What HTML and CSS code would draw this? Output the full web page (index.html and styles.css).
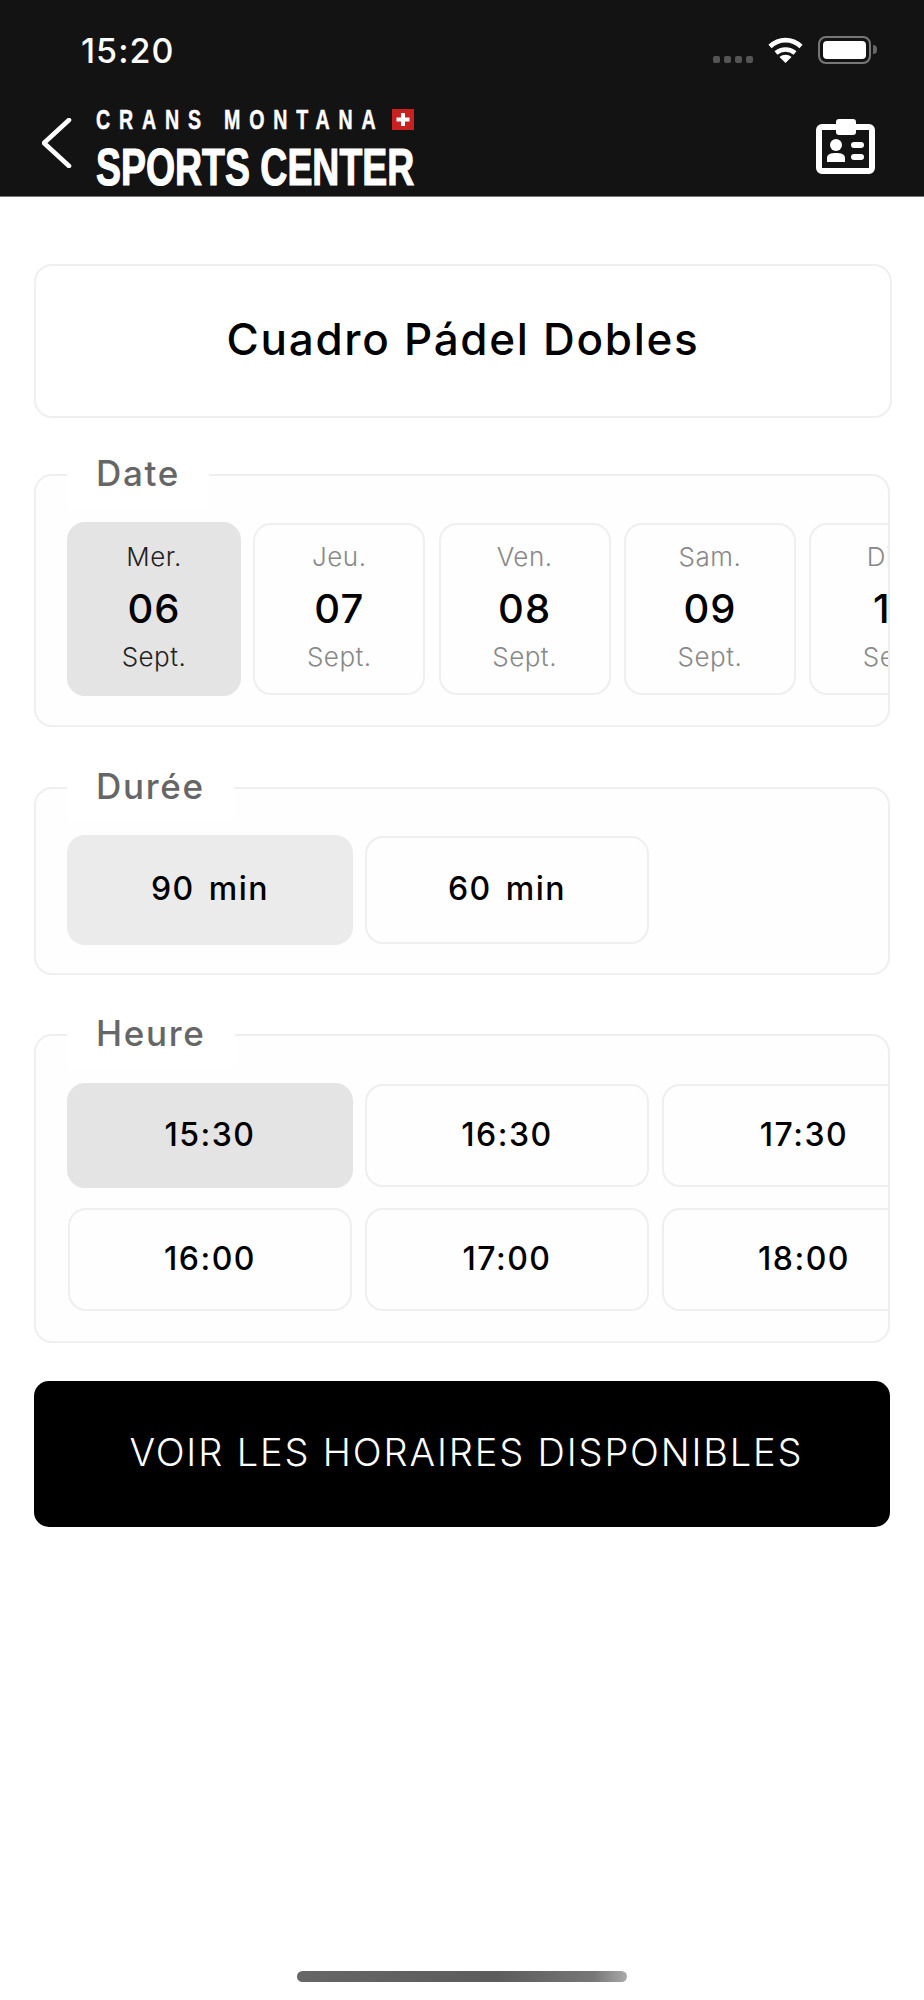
FILE: index.html
```html
<!DOCTYPE html>
<html lang="fr">
<head>
    <meta charset="UTF-8">
    <meta name="viewport" content="width=device-width, initial-scale=1.0">
    <title>Sports Center</title>
    <link rel="stylesheet" href="styles.css">
</head>
<body>
    <header class="header">
        <div class="status-bar">
            <span class="status-time">15:20</span>
            <div class="status-icons">
                <div class="signal"><i></i><i></i><i></i><i></i></div>
                <svg class="wifi" width="35" height="27" viewBox="0 0 35 27">
                    <path d="M2 10.5 C11 2 24 2 33 10.5" fill="none" stroke="#fff" stroke-width="4.6"/>
                    <path d="M8 17 C13.500 12.400 21.500 12.400 27 17" fill="none" stroke="#fff" stroke-width="4.600"/>
                    <path d="M17.500 27 L11.500 21 C15 18 20 18 23.500 21 Z" fill="#fff"/>
                </svg>
                <div class="battery"><div class="battery-level"></div></div>
                <div class="battery-nub"></div>
            </div>
        </div>
        <div class="nav-bar">
            <svg class="back" width="30" height="50" viewBox="0 0 30 50">
                <polyline points="27,2 2,25 27,48" fill="none" stroke="#fff" stroke-width="4.600" stroke-linecap="round" stroke-linejoin="round"/>
            </svg>
            <div class="logo">
                <div class="logo-top">
                    <span class="logo-crans">CRANS MONTANA</span>
                    <svg class="flag" width="22" height="21" viewBox="0 0 22 21">
                        <rect width="22" height="21" fill="#c8211f"/>
                        <path d="M9 4h4v4.500h4.500v4H13V17H9v-4.500H4.500v-4H9z" fill="#fff"/>
                    </svg>
                </div>
                <div class="logo-sports">SPORTS CENTER</div>
            </div>
            <svg class="badge" width="59" height="55" viewBox="0 0 59 55">
                <rect x="3" y="8" width="53" height="44" rx="3" fill="none" stroke="#fff" stroke-width="6"/>
                <rect x="20" y="0" width="20" height="16" rx="3" fill="#fff"/>
                <circle cx="20" cy="26" r="6" fill="#fff"/>
                <path d="M11 43 V39 C11 35 15 34 20 34 C25 34 29 35 29 39 V43 Z" fill="#fff"/>
                <rect x="35" y="23" width="13" height="6" rx="3" fill="#fff"/>
                <rect x="35" y="35" width="13" height="6" rx="3" fill="#fff"/>
            </svg>
        </div>
    </header>

    <main class="content">
        <div class="title-card">Cuadro Pádel Dobles</div>

        <section class="group group-date">
            <div class="group-label">Date</div>
            <div class="scroller date-row">
                <div class="date-card selected"><span>Mer.</span><strong>06</strong><span>Sept.</span></div>
                <div class="date-card"><span>Jeu.</span><strong>07</strong><span>Sept.</span></div>
                <div class="date-card"><span>Ven.</span><strong>08</strong><span>Sept.</span></div>
                <div class="date-card"><span>Sam.</span><strong>09</strong><span>Sept.</span></div>
                <div class="date-card"><span>Dim.</span><strong>10</strong><span>Sept.</span></div>
            </div>
        </section>

        <section class="group group-duration">
            <div class="group-label">Durée</div>
            <div class="scroller duration-row">
                <div class="option selected-light">90 min</div>
                <div class="option">60 min</div>
            </div>
        </section>

        <section class="group group-time">
            <div class="group-label">Heure</div>
            <div class="scroller time-grid">
                <div class="option selected">15:30</div>
                <div class="option">16:00</div>
                <div class="option">16:30</div>
                <div class="option">17:00</div>
                <div class="option">17:30</div>
                <div class="option">18:00</div>
            </div>
        </section>

        <div class="submit">VOIR LES HORAIRES DISPONIBLES</div>
    </main>

    <div class="home-indicator"></div>
</body>
</html>
```

FILE: styles.css
```css
/* General */
* {
    box-sizing: border-box;
}

body {
    margin: 0;
    width: 924px;
    height: 2000px;
    display: flex;
    flex-direction: column;
    background-color: #fff;
    color: #000;
    font-family: Inter, "Liberation Sans", sans-serif;
    overflow: hidden;
}

/* Header */
.header {
    height: 197px;
    background-color: #131313;
    border-bottom: 1px solid #777;
    color: #fff;
}

.status-bar {
    height: 100px;
    padding: 31px 47px 0 81px;
    display: flex;
    justify-content: space-between;
}

.status-time {
    font-size: 34px;
    font-weight: 500;
    line-height: 39px;
    letter-spacing: 1px;
}

.status-icons {
    display: flex;
    align-items: flex-start;
    padding-top: 5px;
}

.signal {
    display: flex;
    gap: 4px;
    margin-top: 20px;
    margin-right: 15px;
}

.signal i {
    width: 7px;
    height: 7px;
    border-radius: 2px;
    background-color: #555;
}

.wifi {
    margin-right: 15px;
}

.battery {
    width: 53px;
    height: 28px;
    padding: 3px;
    border: 2px solid #777;
    border-radius: 8px;
}

.battery-level {
    height: 100%;
    background-color: #fff;
    border-radius: 4px;
}

.battery-nub {
    width: 4px;
    height: 9px;
    margin: 9px 0 0 2px;
    background-color: #666;
    border-radius: 0 4px 4px 0;
}

.nav-bar {
    height: 96px;
    padding: 9px 49px 0 42px;
    display: flex;
    align-items: flex-start;
}

.back {
    margin-top: 9px;
    margin-right: 24px;
}

.logo {
    flex: 1;
    font-family: "Liberation Sans", Arial, sans-serif;
    font-weight: bold;
}

.logo-top {
    height: 38px;
    display: flex;
    align-items: flex-start;
}

.logo-crans {
    width: 296px;
    font-size: 28px;
    line-height: 22px;
    letter-spacing: 12.6px;
    white-space: nowrap;
    transform: scaleX(0.7);
    transform-origin: left;
    -webkit-text-stroke: 0.5px #fff;
}

.logo-sports {
    font-size: 52px;
    line-height: 40px;
    white-space: nowrap;
    transform: scaleX(0.72);
    transform-origin: left;
    -webkit-text-stroke: 1.2px #fff;
}

.badge {
    margin-top: 10px;
}

/* Content */
.content {
    padding: 67px 32px 0 34px;
}

.title-card {
    height: 154px;
    margin-bottom: 56px;
    padding-bottom: 4px;
    display: flex;
    align-items: center;
    justify-content: center;
    border: 2px solid #efefef;
    border-radius: 18px;
    font-size: 44px;
    font-weight: 500;
    letter-spacing: 1.7px;
}

/* Groups */
.group {
    position: relative;
    margin-right: 2px;
    padding-left: 31px;
    background-color: #fefefe;
    border: 2px solid #efefef;
    border-radius: 18px;
}

.group-date {
    height: 253px;
    margin-bottom: 60px;
    padding-top: 46px;
}

.group-duration {
    height: 188px;
    margin-bottom: 59px;
    padding-top: 46px;
}

.group-time {
    height: 309px;
    margin-bottom: 38px;
    padding-top: 47px;
}

.group-label {
    position: absolute;
    top: -24px;
    left: 31px;
    height: 56px;
    padding: 0 29px;
    background-color: #fff;
    color: #666;
    font-size: 35px;
    font-weight: 500;
    line-height: 42px;
    letter-spacing: 1.7px;
}

.scroller {
    display: flex;
    overflow: hidden;
}

/* Date cards */
.date-row {
    gap: 11.3px;
}

.date-card {
    flex: 0 0 172px;
    height: 172px;
    margin: 1px;
    padding-top: 17px;
    display: flex;
    flex-direction: column;
    align-items: center;
    border: 2px solid #efefef;
    border-radius: 18px;
    color: #888;
    font-size: 26px;
    line-height: 30px;
    font-weight: 300;
    letter-spacing: 0.5px;
}

.date-card strong {
    margin: 15px 0 11px;
    color: #000;
    font-size: 40px;
    line-height: 44px;
    font-weight: 500;
    letter-spacing: 1px;
}

.date-card.selected {
    flex-basis: 174px;
    height: 174px;
    margin: 0;
    padding-top: 18px;
    background-color: #e4e4e4;
    border-color: #e4e4e4;
    color: #222;
}

/* Duration and time options */
.duration-row {
    gap: 11px;
    word-spacing: 4px;
}

.option {
    flex: 0 0 284px;
    height: 108px;
    margin: 1px;
    padding-bottom: 3px;
    display: flex;
    align-items: center;
    justify-content: center;
    border: 2px solid #efefef;
    border-radius: 18px;
    font-size: 32px;
    font-weight: 500;
    letter-spacing: 1.5px;
}

.option.selected-light {
    flex-basis: 286px;
    height: 110px;
    margin: 0;
    background-color: #ebebeb;
    border-color: #ebebeb;
}

.time-grid {
    display: grid;
    grid-template-rows: 105px 105px;
    grid-auto-flow: column;
    grid-auto-columns: 286px;
    column-gap: 11px;
    row-gap: 19px;
}

.time-grid .option {
    height: auto;
}

.time-grid .option.selected {
    margin: 0;
    background-color: #e4e4e4;
    border-color: #e4e4e4;
}

/* Submit button */
.submit {
    height: 146px;
    margin-right: 2px;
    padding: 0 0 4px 9px;
    display: flex;
    align-items: center;
    justify-content: center;
    background-color: #000;
    border-radius: 15px;
    color: #fff;
    font-size: 38px;
    font-weight: 300;
    letter-spacing: 1.85px;
}

.home-indicator {
    width: 330px;
    height: 11px;
    margin: auto 0 18px 297px;
    border-radius: 6px;
    background: linear-gradient(90deg, #666 0%, #5c5c5c 60%, #777 90%, #aaa 100%);
}
```
